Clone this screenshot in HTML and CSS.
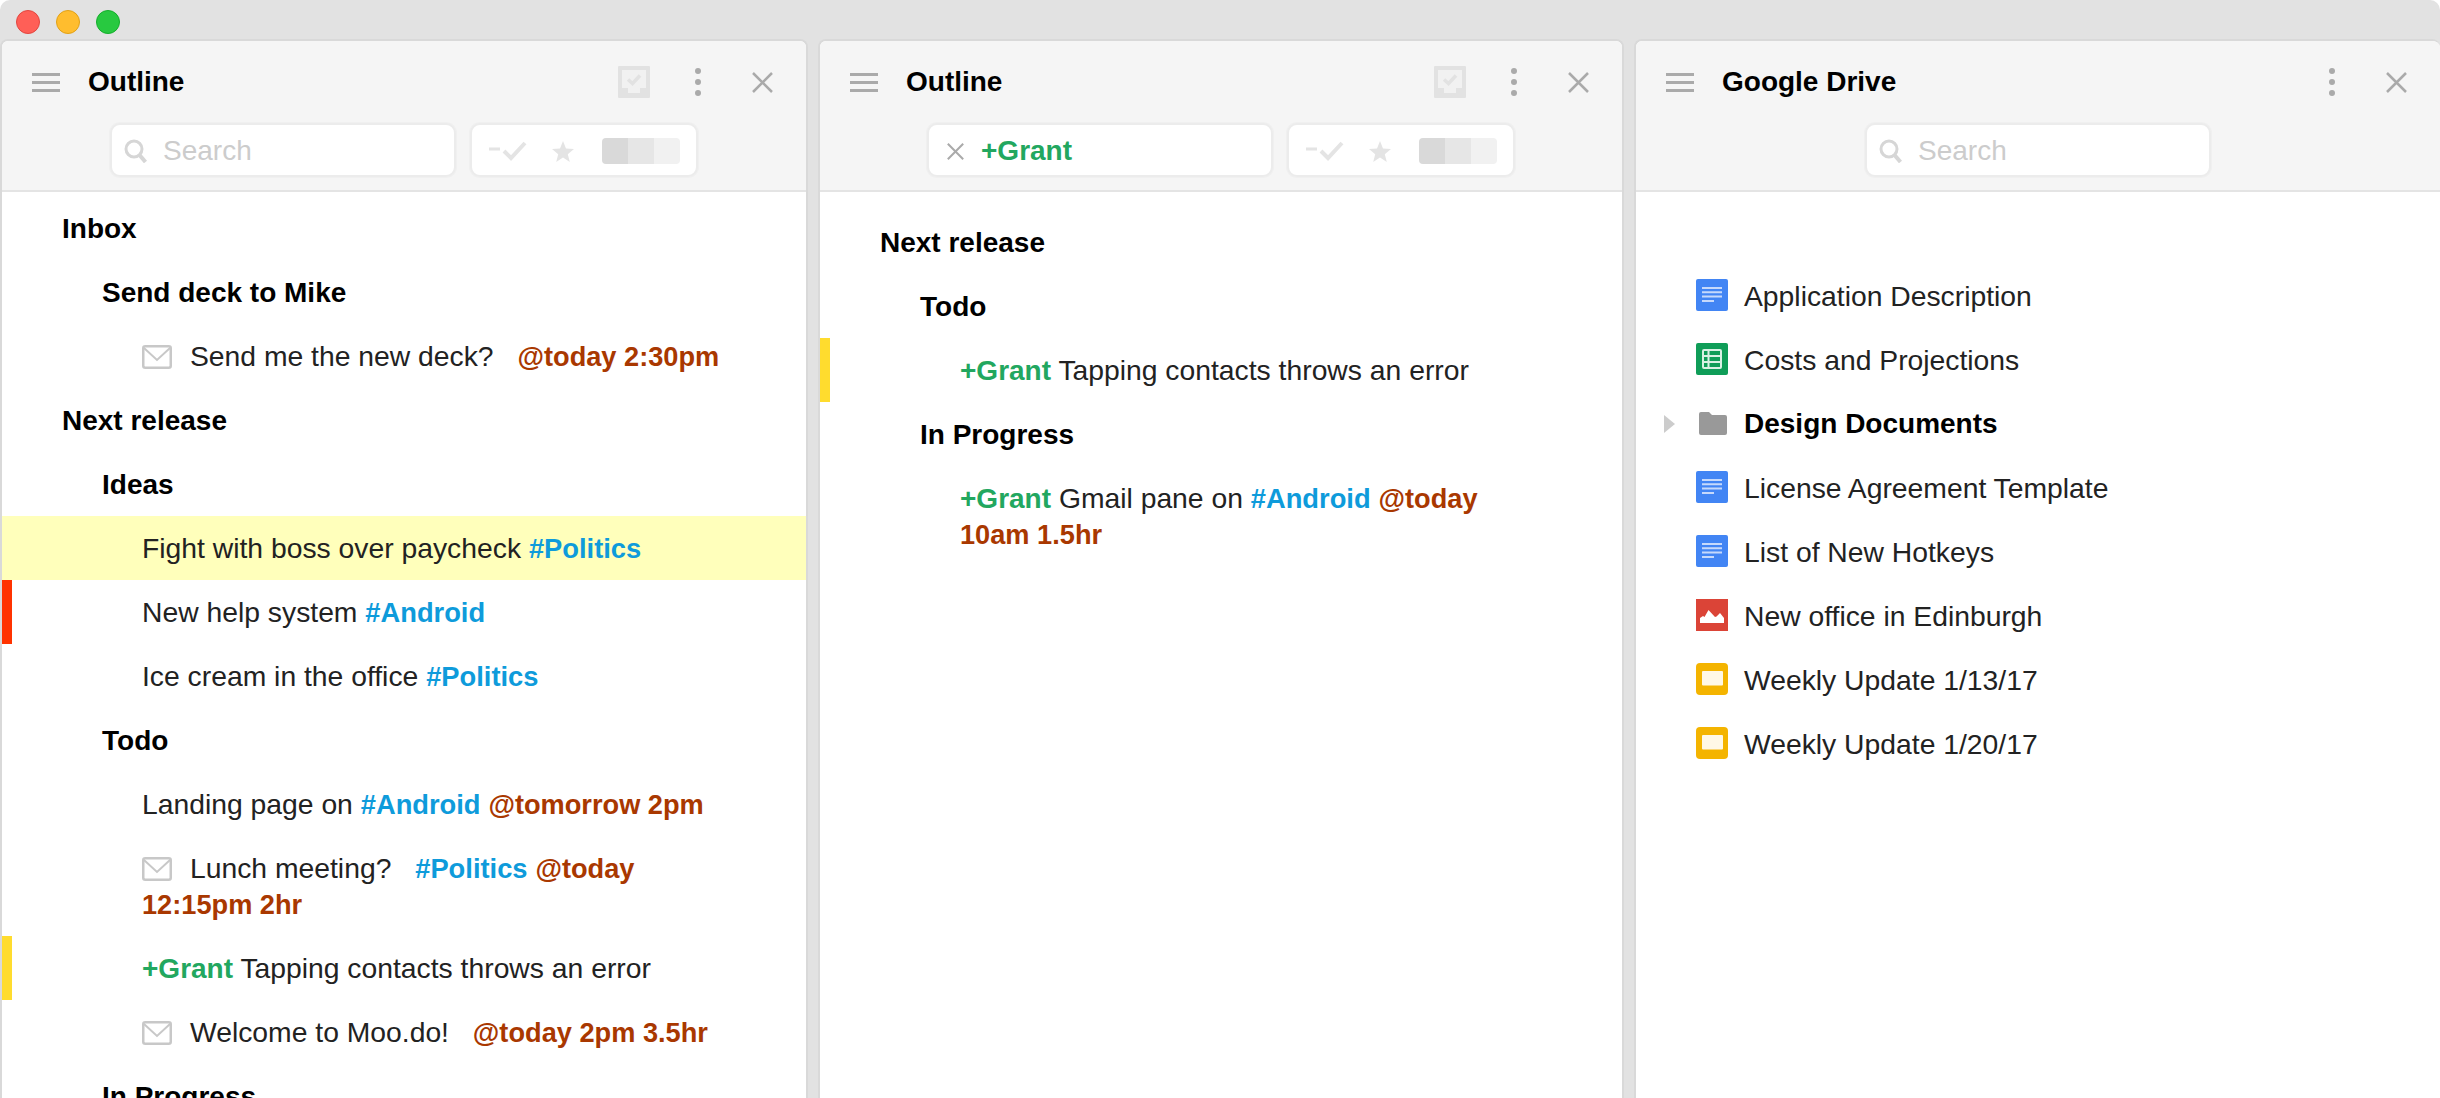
FILE: index.html
```html
<!DOCTYPE html>
<html lang="en">
<head>
    <meta charset="UTF-8">
    <title>Moo.do</title>
    <link rel="stylesheet" href="styles.css">
</head>
<body>
    <svg class="defs" width="0" height="0">
        <symbol id="menu" viewBox="0 0 28 19"><path d="M0 1.500h28M0 9.500h28M0 17.500h28" stroke="#aaa" stroke-width="3" fill="none"/></symbol>
        <symbol id="tray" viewBox="0 0 32 32"><path fill-rule="evenodd" d="M1 0h30a1 1 0 0 1 1 1v30a1 1 0 0 1-1 1H1a1 1 0 0 1-1-1V1a1 1 0 0 1 1-1zM4 4v18h6v5h12v-5h6V4z" fill="#e2e2e2"/><path d="M4 4h24v18h-6v5H10v-5H4z" fill="#f1f1f1"/><path d="M10 13.500l4.500 4 7.500-8" stroke="#e2e2e2" stroke-width="3.500" fill="none"/></symbol>
        <symbol id="dots" viewBox="0 0 6 28"><circle cx="3" cy="3" r="3" fill="#aaa"/><circle cx="3" cy="14" r="3" fill="#aaa"/><circle cx="3" cy="25" r="3" fill="#aaa"/></symbol>
        <symbol id="cross" viewBox="0 0 21 21"><path d="M1 1l19 19M20 1L1 20" stroke="#aaa" stroke-width="2.500" fill="none"/></symbol>
        <symbol id="search" viewBox="0 0 24 24"><circle cx="10" cy="10" r="8" stroke="#d6d6d6" stroke-width="3" fill="none"/><path d="M15.500 16l6 7" stroke="#d6d6d6" stroke-width="4" fill="none"/></symbol>
        <symbol id="dashcheck" viewBox="0 0 38 20"><path d="M0 8h11" stroke="#e4e4e4" stroke-width="3" fill="none"/><path d="M15 10l7 7L36 2" stroke="#e4e4e4" stroke-width="4" fill="none"/></symbol>
        <symbol id="star" viewBox="0 0 22 21"><path d="M11 0l3 7.500 8 .5-6.200 5.200 2 7.800L11 16.600 4.200 21l2-7.800L0 8l8-.5z" fill="#e4e4e4"/></symbol>
        <symbol id="mail" viewBox="0 0 30 24"><rect x="1.250" y="1.250" width="27.500" height="21.500" rx="2" fill="#fff" stroke="#c8c8c8" stroke-width="2.500"/><path d="M2 3l13 12L28 3" stroke="#c8c8c8" stroke-width="2" fill="none"/></symbol>
        <symbol id="doc" viewBox="0 0 32 32"><rect width="32" height="32" rx="2" fill="#4285f4"/><path d="M6 9h20M6 13.300h20M6 17.600h20M6 21.900h12" stroke="#c6d9fb" stroke-width="2" fill="none"/></symbol>
        <symbol id="sheet" viewBox="0 0 32 32"><rect width="32" height="32" rx="2" fill="#0f9d58"/><path d="M8 7h16a1 1 0 0 1 1 1v16a1 1 0 0 1-1 1H8a1 1 0 0 1-1-1V8a1 1 0 0 1 1-1zM7 13h18M7 19h18M12.500 7v18" stroke="#d9f1e4" stroke-width="2" fill="none"/></symbol>
        <symbol id="folder" viewBox="0 0 28 23"><path d="M2 0h8l3 3h13a2 2 0 0 1 2 2v16a2 2 0 0 1-2 2H2a2 2 0 0 1-2-2V2a2 2 0 0 1 2-2z" fill="#999"/></symbol>
        <symbol id="photo" viewBox="0 0 32 32"><rect width="32" height="32" fill="#db4437"/><path d="M4 24v-5l3-2 1.500 1L12.500 11l6.500 7 1.500-.5L24 14l4 5v5z" fill="#fff"/></symbol>
        <symbol id="slide" viewBox="0 0 32 32"><rect width="32" height="32" rx="4" fill="#f4b400"/><rect x="6" y="8" width="21" height="14.500" rx="1" fill="#fff8e6"/></symbol>
    </svg>

    <div class="window">
        <div class="titlebar">
            <span class="light red"></span>
            <span class="light yellow"></span>
            <span class="light green"></span>
        </div>

        <div class="panes">
            <section class="pane">
                <header class="pane-head">
                    <div class="pane-top">
                        <span class="btn"><svg class="ic-menu"><use href="#menu"/></svg></span>
                        <h2 class="pane-title">Outline</h2>
                        <span class="btn"><svg class="ic-tray"><use href="#tray"/></svg></span>
                        <span class="btn"><svg class="ic-dots"><use href="#dots"/></svg></span>
                        <span class="btn"><svg class="ic-cross"><use href="#cross"/></svg></span>
                    </div>
                    <div class="pane-tools">
                        <div class="searchbox">
                            <svg class="ic-search"><use href="#search"/></svg>
                            <span class="placeholder">Search</span>
                        </div>
                        <div class="filterbox">
                            <svg class="ic-dashcheck"><use href="#dashcheck"/></svg>
                            <svg class="ic-star"><use href="#star"/></svg>
                            <div class="segments"><i></i><i></i><i></i></div>
                        </div>
                    </div>
                </header>
                <div class="outline">
                    <div class="row l1 head">Inbox</div>
                    <div class="row l2 head">Send deck to Mike</div>
                    <div class="row l3"><svg class="ic-mail"><use href="#mail"/></svg>Send me the new deck? <span class="when gap">@today 2:30pm</span></div>
                    <div class="row l1 head">Next release</div>
                    <div class="row l2 head">Ideas</div>
                    <div class="row l3 selected">Fight with boss over paycheck <span class="tag">#Politics</span></div>
                    <div class="row l3 flag-red">New help system <span class="tag">#Android</span></div>
                    <div class="row l3">Ice cream in the office <span class="tag">#Politics</span></div>
                    <div class="row l2 head">Todo</div>
                    <div class="row l3">Landing page on <span class="tag">#Android</span> <span class="when">@tomorrow 2pm</span></div>
                    <div class="row l3"><svg class="ic-mail"><use href="#mail"/></svg>Lunch meeting? <span class="tag gap">#Politics</span> <span class="when">@today</span> <span class="when">12:15pm 2hr</span></div>
                    <div class="row l3 flag-yellow"><span class="person">+Grant</span> Tapping contacts throws an error</div>
                    <div class="row l3"><svg class="ic-mail"><use href="#mail"/></svg>Welcome to Moo.do! <span class="when gap">@today 2pm 3.5hr</span></div>
                    <div class="row l2 head">In Progress</div>
                </div>
            </section>

            <section class="pane">
                <header class="pane-head">
                    <div class="pane-top">
                        <span class="btn"><svg class="ic-menu"><use href="#menu"/></svg></span>
                        <h2 class="pane-title">Outline</h2>
                        <span class="btn"><svg class="ic-tray"><use href="#tray"/></svg></span>
                        <span class="btn"><svg class="ic-dots"><use href="#dots"/></svg></span>
                        <span class="btn"><svg class="ic-cross"><use href="#cross"/></svg></span>
                    </div>
                    <div class="pane-tools">
                        <div class="searchbox">
                            <svg class="ic-clear"><use href="#cross"/></svg>
                            <span class="person">+Grant</span>
                        </div>
                        <div class="filterbox">
                            <svg class="ic-dashcheck"><use href="#dashcheck"/></svg>
                            <svg class="ic-star"><use href="#star"/></svg>
                            <div class="segments"><i></i><i></i><i></i></div>
                        </div>
                    </div>
                </header>
                <div class="outline filtered">
                    <div class="row l1 head">Next release</div>
                    <div class="row l2 head">Todo</div>
                    <div class="row l3 flag-yellow"><span class="person">+Grant</span> Tapping contacts throws an error</div>
                    <div class="row l2 head">In Progress</div>
                    <div class="row l3"><span class="person">+Grant</span> Gmail pane on <span class="tag">#Android</span> <span class="when">@today</span> <span class="when">10am 1.5hr</span></div>
                </div>
            </section>

            <section class="pane pane-last">
                <header class="pane-head">
                    <div class="pane-top">
                        <span class="btn"><svg class="ic-menu"><use href="#menu"/></svg></span>
                        <h2 class="pane-title">Google Drive</h2>
                        <span class="btn"><svg class="ic-dots"><use href="#dots"/></svg></span>
                        <span class="btn"><svg class="ic-cross"><use href="#cross"/></svg></span>
                    </div>
                    <div class="pane-tools">
                        <div class="searchbox">
                            <svg class="ic-search"><use href="#search"/></svg>
                            <span class="placeholder">Search</span>
                        </div>
                    </div>
                </header>
                <div class="drive">
                    <div class="file"><span class="arrow-slot"></span><svg class="ic-file"><use href="#doc"/></svg>Application Description</div>
                    <div class="file"><span class="arrow-slot"></span><svg class="ic-file"><use href="#sheet"/></svg>Costs and Projections</div>
                    <div class="file folder"><span class="arrow-slot"><span class="arrow"></span></span><svg class="ic-file ic-folder"><use href="#folder"/></svg>Design Documents</div>
                    <div class="file"><span class="arrow-slot"></span><svg class="ic-file"><use href="#doc"/></svg>License Agreement Template</div>
                    <div class="file"><span class="arrow-slot"></span><svg class="ic-file"><use href="#doc"/></svg>List of New Hotkeys</div>
                    <div class="file"><span class="arrow-slot"></span><svg class="ic-file"><use href="#photo"/></svg>New office in Edinburgh</div>
                    <div class="file"><span class="arrow-slot"></span><svg class="ic-file"><use href="#slide"/></svg>Weekly Update 1/13/17</div>
                    <div class="file"><span class="arrow-slot"></span><svg class="ic-file"><use href="#slide"/></svg>Weekly Update 1/20/17</div>
                </div>
            </section>
        </div>
    </div>
</body>
</html>
```

FILE: styles.css
```css
html, body {
    margin: 0;
    height: 100%;
    overflow: hidden;
}
body {
    font-family: "Liberation Sans", Arial, sans-serif;
    font-size: 28.3px;
    color: #222;
    background-color: #fff;
}
.defs {
    position: absolute;
}
.window {
    height: 1098px;
    display: flex;
    flex-direction: column;
    background-color: #e2e2e2;
    border-radius: 10px 10px 0 0;
    overflow: hidden;
}
.titlebar {
    flex: none;
    height: 39px;
    padding: 10px 0 0 16px;
    box-sizing: border-box;
    display: flex;
    gap: 16px;
}
.light {
    width: 24px;
    height: 24px;
    border-radius: 50%;
    box-sizing: border-box;
}
.red { background-color: #ff5f57; border: 1px solid #e2463f; }
.yellow { background-color: #ffbd2e; border: 1px solid #e1a116; }
.green { background-color: #28c940; border: 1px solid #14ae2b; }

.panes {
    flex: 1;
    display: grid;
    grid-template-columns: 808px 806px 806px;
    column-gap: 10px;
    min-height: 0;
}
.pane {
    background-color: #fff;
    border: 2px solid #d9d9d9;
    border-bottom: none;
    border-radius: 8px 8px 0 0;
    overflow: hidden;
}
.pane-last {
    border-right: none;
}
.pane-head {
    height: 149px;
    background-color: #f5f5f5;
    border-bottom: 2px solid #e4e4e4;
}
.pane-top {
    height: 82px;
    padding: 0 12px;
    display: flex;
    align-items: center;
}
.btn {
    width: 64px;
    height: 64px;
    flex: none;
    display: flex;
    align-items: center;
    justify-content: center;
}
.pane-title {
    flex: 1;
    margin: 0 0 0 10px;
    font-size: 28px;
    font-weight: bold;
    color: #000;
}
.ic-menu { width: 28px; height: 19px; }
.ic-tray { width: 32px; height: 32px; }
.ic-dots { width: 6px; height: 28px; }
.ic-cross { width: 21px; height: 21px; }

.pane-tools {
    display: flex;
    justify-content: center;
    gap: 14px;
}
.searchbox, .filterbox {
    height: 54px;
    box-sizing: border-box;
    background-color: #fff;
    border: 2px solid #ececec;
    border-radius: 10px;
    box-shadow: 0 0 0 1px #f0f0f0;
    display: flex;
    align-items: center;
    padding-top: 2px;
}
.searchbox {
    width: 346px;
    padding-left: 12px;
}
.filterbox {
    width: 228px;
    padding-left: 17px;
}
.ic-search { width: 24px; height: 24px; margin-right: 15px; }
.ic-clear { width: 17px; height: 17px; margin: 0 17px 0 6px; }
.placeholder { color: #ccc; font-size: 28px; }
.ic-dashcheck { width: 38px; height: 20px; margin-right: 25px; }
.ic-star { width: 22px; height: 21px; margin-right: 28px; }
.segments {
    display: flex;
    border-radius: 4px;
    overflow: hidden;
}
.segments i {
    width: 26px;
    height: 26px;
    background-color: #d9d9d9;
}
.segments i:nth-child(2) { background-color: #e6e6e6; }
.segments i:nth-child(3) { background-color: #f1f1f1; }

.outline {
    padding-top: 4px;
}
.outline.filtered {
    padding-top: 18px;
}
.row {
    padding: 15px 76px 13px 0;
    line-height: 36px;
}
.l1 { padding-left: 60px; }
.l2 { padding-left: 100px; }
.l3 {
    padding-left: 140px;
    padding-top: 14px;
    padding-bottom: 14px;
}
.head {
    font-size: 28px;
    font-weight: bold;
    color: #000;
}
.selected { background-color: #ffffbb; }
.flag-red { box-shadow: inset 10px 0 0 #ff3300; }
.flag-yellow { box-shadow: inset 10px 0 0 #ffdc2e; }

.tag, .when, .person {
    font-weight: bold;
    line-height: 1;
}
.tag { color: #0e9bdb; font-size: 27.3px; }
.when { color: #a93800; font-size: 27.2px; }
.person { color: #22a75f; font-size: 28px; }
.gap { margin-left: 16px; }
.ic-mail {
    width: 30px;
    height: 24px;
    margin-right: 18px;
    vertical-align: -3px;
}

.drive {
    padding-top: 71px;
}
.file {
    height: 64px;
    box-sizing: border-box;
    padding: 2px 0 0 28px;
    display: flex;
    align-items: center;
}
.arrow-slot {
    width: 32px;
    flex: none;
}
.arrow {
    display: block;
    width: 0;
    height: 0;
    border-left: 11px solid #ccc;
    border-top: 9px solid transparent;
    border-bottom: 9px solid transparent;
}
.ic-file {
    width: 32px;
    height: 32px;
    flex: none;
    margin: -2px 16px 0 0;
}
.ic-folder {
    width: 28px;
    height: 23px;
    margin: -2px 17px 0 3px;
}
.folder {
    font-size: 28px;
    font-weight: bold;
    color: #000;
}
```
